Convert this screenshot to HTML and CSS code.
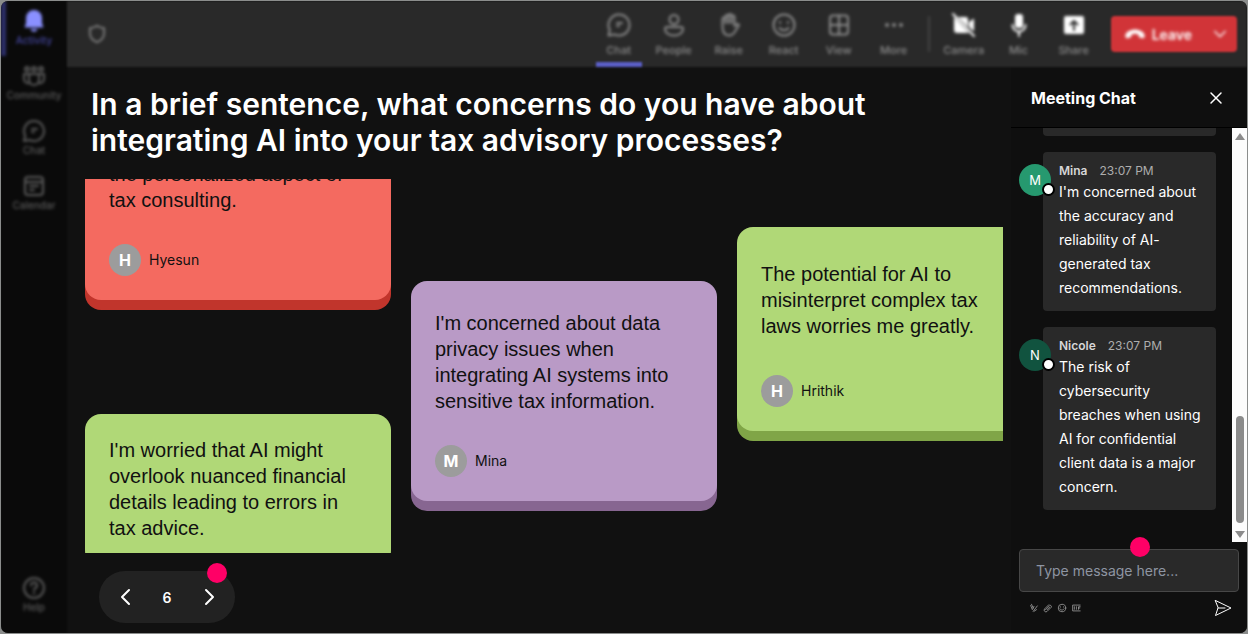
FILE: index.html
```html
<!DOCTYPE html>
<html lang="en">

<head>
    <meta charset="UTF-8">
    <meta name="viewport" content="width=device-width, initial-scale=1.0">
    <title>Meeting</title>
    <link rel="stylesheet" href="styles.css">
</head>

<body>
    <div class="app">
        <!-- Sidebar -->
        <nav class="sidebar">
            <a href="#" class="side-item active">
                <svg class="icon" viewBox="0 0 24 24"><path class="fill" d="M12 1a8 8 0 0 0-8 8v5l-1.500 4.500h19L20 14V9a8 8 0 0 0-8-8zM8.500 20a3.600 3.600 0 0 0 7 0z"/></svg>
                <span>Activity</span>
            </a>
            <a href="#" class="side-item">
                <svg class="icon" viewBox="0 0 24 24"><circle cx="5" cy="5" r="2"/><circle cx="12" cy="5" r="2"/><circle cx="19" cy="5" r="2"/><path d="M7 10h10v6a5 5 0 0 1-10 0zM7 10H2v5a4 4 0 0 0 5 4M17 10h5v5a4 4 0 0 1-5 4"/></svg>
                <span>Community</span>
            </a>
            <a href="#" class="side-item">
                <svg class="icon" viewBox="0 0 24 24"><path d="M12 2a10 10 0 1 1-4.500 18.900L2 22l1.200-5.300A10 10 0 0 1 12 2zM10 10h5M10 13h2"/></svg>
                <span>Chat</span>
            </a>
            <a href="#" class="side-item">
                <svg class="icon" viewBox="0 0 24 24"><rect x="3" y="3" width="18" height="18" rx="3"/><path d="M3 8h18M8 12h8M8 16h4"/></svg>
                <span>Calendar</span>
            </a>
            <a href="#" class="side-item help">
                <svg class="icon" viewBox="0 0 24 24"><circle cx="12" cy="12" r="10"/><path d="M9 9.500a3 3 0 1 1 4 2.800c-.8.400-1 .8-1 1.700M12 16.500v1"/></svg>
                <span>Help</span>
            </a>
        </nav>

        <div class="main">
            <!-- Meeting controls -->
            <header class="topbar">
                <svg class="icon shield" viewBox="0 0 24 24"><path d="M12 2c2.500 2 5.500 3 8.500 3v6c0 5-3 8.500-8.500 11-5.500-2.500-8.500-6-8.500-11V5c3 0 6-1 8.500-3z"/></svg>
                <div class="tools">
                    <button class="tool active">
                        <svg class="icon" viewBox="0 0 24 24"><path d="M12 1.500a10.500 10.500 0 1 1-4.700 19.900L1.500 22.500l1.300-5.400A10.500 10.500 0 0 1 12 1.500zM10 10h5M10 13h2"/></svg>
                        <span>Chat</span>
                    </button>
                    <button class="tool">
                        <svg class="icon" viewBox="0 0 24 24"><circle cx="12" cy="6.500" r="4.500"/><path d="M5 14h14a2 2 0 0 1 2 2c0 4-4 6.500-9 6.500S3 20 3 16a2 2 0 0 1 2-2z"/></svg>
                        <span>People</span>
                    </button>
                    <button class="tool">
                        <svg class="icon" viewBox="0 0 24 24"><path d="M5.500 13V6a1.500 1.500 0 0 1 3 0V3.500a1.500 1.500 0 0 1 3 0V2.500a1.500 1.500 0 0 1 3 0V4a1.500 1.500 0 0 1 3 0v9l2-1.500c1.500-1 3 0 2 1.500l-4.500 7c-1.500 2-3 2.500-5 2.500-4 0-6.500-3-6.500-9.500zM8.500 4v6M11.500 3v7M14.500 3v7"/></svg>
                        <span>Raise</span>
                    </button>
                    <button class="tool">
                        <svg class="icon" viewBox="0 0 24 24"><circle cx="12" cy="12" r="10.500"/><path d="M8 9v1M16 9v1M7.500 15c2.500 3 6.500 3 9 0"/></svg>
                        <span>React</span>
                    </button>
                    <button class="tool">
                        <svg class="icon" viewBox="0 0 24 24"><rect x="3" y="2.500" width="18" height="19" rx="3"/><path d="M12 2.500v19M3 12h18"/></svg>
                        <span>View</span>
                    </button>
                    <button class="tool">
                        <svg class="icon" viewBox="0 0 24 24"><circle class="fill" cx="5" cy="12" r="2"/><circle class="fill" cx="12" cy="12" r="2"/><circle class="fill" cx="19" cy="12" r="2"/></svg>
                        <span>More</span>
                    </button>
                    <span class="divider"></span>
                    <button class="tool bright">
                        <svg class="icon" viewBox="0 0 24 24"><path class="fill" d="M2 4l15 16H5a3 3 0 0 1-3-3zM6 4h8a2 2 0 0 1 2 2v8zM17 9l5-3.500v13L17 14z"/><path d="M1 1l21 22"/></svg>
                        <span>Camera</span>
                    </button>
                    <button class="tool bright">
                        <svg class="icon" viewBox="0 0 24 24"><rect class="fill" x="8" y="1" width="8" height="14" rx="3"/><path d="M5.500 12a6.500 6.500 0 0 0 13 0M12 18.500V23"/></svg>
                        <span>Mic</span>
                    </button>
                    <button class="tool bright">
                        <svg class="icon" viewBox="0 0 24 24"><rect class="fill" x="2" y="3" width="20" height="18" rx="2"/><path class="arrow" d="M12 17V8M8.500 11.500L12 8l3.500 3.500"/></svg>
                        <span>Share</span>
                    </button>
                </div>
                <button class="leave">
                    <svg class="icon" viewBox="0 0 24 24"><path class="fill" d="M12 7c5 0 9.500 2.500 10.500 6 .4 2-.5 4-2 3.700l-3-.7c-1.500-.4-1.500-3-2-3.500-2-.9-5-.9-7 0-.5.500-.5 3.100-2 3.500l-3 .7c-1.500.3-2.400-1.700-2-3.700C2.500 9.500 7 7 12 7z"/></svg>
                    <span>Leave</span>
                    <svg class="icon chevron" viewBox="0 0 24 24"><path d="M4 8l8 8 8-8"/></svg>
                </button>
            </header>

            <div class="content">
                <!-- Answers -->
                <section class="board">
                    <h1>In a brief sentence, what concerns do you have about integrating AI into your tax advisory processes?</h1>
                    <div class="wall">
                        <div class="column first">
                            <article class="card red">
                                <p>the personalized aspect of tax consulting.</p>
                                <div class="author"><span class="initial">H</span>Hyesun</div>
                            </article>
                            <article class="card green">
                                <p>I'm worried that AI might overlook nuanced financial details leading to errors in tax advice.</p>
                            </article>
                        </div>
                        <div class="column second">
                            <article class="card purple">
                                <p>I'm concerned about data privacy issues when integrating AI systems into sensitive tax information.</p>
                                <div class="author"><span class="initial">M</span>Mina</div>
                            </article>
                        </div>
                        <div class="column third">
                            <article class="card green">
                                <p>The potential for AI to misinterpret complex tax laws worries me greatly.</p>
                                <div class="author"><span class="initial">H</span>Hrithik</div>
                            </article>
                        </div>
                    </div>
                    <div class="pager">
                        <button aria-label="Previous"><svg class="icon" viewBox="0 0 16 20"><path d="M12 3l-7 7 7 7"/></svg></button>
                        <span>6</span>
                        <button aria-label="Next"><svg class="icon" viewBox="0 0 16 20"><path d="M5 3l7 7-7 7"/></svg></button>
                        <i class="dot"></i>
                    </div>
                </section>

                <!-- Chat -->
                <aside class="chat">
                    <div class="chat-header">
                        <h2>Meeting Chat</h2>
                        <button aria-label="Close"><svg class="icon" viewBox="0 0 14 14"><path d="M2 2l10 10M12 2L2 12"/></svg></button>
                    </div>
                    <div class="chat-body">
                        <div class="messages">
                            <div class="message previous"></div>
                            <div class="message">
                                <span class="avatar mina">M</span>
                                <div class="meta"><strong>Mina</strong><time>23:07 PM</time></div>
                                <p>I'm concerned about the accuracy and reliability of AI-generated tax recommendations.</p>
                            </div>
                            <div class="message">
                                <span class="avatar nicole">N</span>
                                <div class="meta"><strong>Nicole</strong><time>23:07 PM</time></div>
                                <p>The risk of cybersecurity breaches when using AI for confidential client data is a major concern.</p>
                            </div>
                        </div>
                        <div class="scrollbar">
                            <i class="up"></i>
                            <i class="thumb"></i>
                            <i class="down"></i>
                        </div>
                    </div>
                    <div class="compose">
                        <i class="dot"></i>
                        <input type="text" placeholder="Type message here..." aria-label="Message" autocomplete="off">
                        <div class="compose-tools">
                            <button aria-label="Format"><svg class="icon" viewBox="0 0 12 12"><path d="M2 3l2 5 2-4M3 1.500L5 6M5 10l5-6.500M6 10l3-2"/></svg></button>
                            <button aria-label="Attach"><svg class="icon" viewBox="0 0 12 12"><path d="M3 8l5-5a1.500 1.500 0 0 1 2 2l-5 5a2 2 0 0 1-3-3l5-5M5 8l3-3"/></svg></button>
                            <button aria-label="Emoji"><svg class="icon" viewBox="0 0 12 12"><circle cx="6" cy="6" r="4.500"/><path d="M4 4.500v.5M8 4.500v.5M3.500 7c1 2 4 2 5 0"/></svg></button>
                            <button aria-label="GIF"><svg class="icon" viewBox="0 0 12 12"><path d="M11 2.500H2v7h9M4 4.500v3M6.500 4.500v3M9 7.500v-3h2M9 6h1.500"/></svg></button>
                            <button class="send" aria-label="Send"><svg class="icon" viewBox="0 0 18 18"><path d="M1.500 1.500L17 9 1.500 16.500 4 9zM4 9h7"/></svg></button>
                        </div>
                    </div>
                </aside>
            </div>
        </div>
    </div>
</body>

</html>
```
FILE: styles.css
```css
* {
    box-sizing: border-box;
}

body {
    margin: 0;
    padding: 1px;
    background: #8b8d8c;
    font-family: Inter, "Liberation Sans", sans-serif;
    color: #fff;
}

h1,
h2,
p {
    margin: 0;
}

button {
    padding: 0;
    border: none;
    background: none;
    color: inherit;
    font: inherit;
    cursor: pointer;
}

.icon {
    display: block;
    width: 24px;
    height: 24px;
    fill: none;
    stroke: currentColor;
    stroke-width: 2;
    stroke-linecap: round;
    stroke-linejoin: round;
}

.icon .fill {
    fill: currentColor;
    stroke: none;
}

.app {
    display: flex;
    min-height: calc(100vh - 2px);
    border-radius: 7px;
    background: #111;
    overflow: hidden;
}

/* Sidebar */
.sidebar {
    display: flex;
    flex-direction: column;
    width: 66px;
    background: #0a0a0a;
    padding-bottom: 10px;
    filter: blur(1px);
}

.side-item {
    display: flex;
    flex-direction: column;
    align-items: center;
    gap: 1px;
    height: 55px;
    padding-top: 8px;
    color: #5c5c5c;
    font-size: 10px;
    font-weight: 500;
    line-height: 12px;
    text-decoration: none;
    filter: blur(1px);
}

.side-item.active {
    border-left: 5px solid #2d2f6b;
    padding-right: 5px;
    color: #4547a0;
}

.side-item.active .icon {
    color: #8a90ff;
}

.side-item.help {
    margin-top: auto;
}

.main {
    display: flex;
    flex-direction: column;
    flex: 1;
    min-width: 0;
}

/* Top bar */
.topbar {
    display: flex;
    align-items: center;
    height: 66px;
    padding: 0 10px 0 20px;
    background: #292929;
    color: #8c8c8c;
    filter: blur(1px);
}

.topbar .icon,
.topbar span {
    filter: blur(1px);
}

.shield {
    width: 20px;
    height: 20px;
}

.tools {
    display: flex;
    align-items: center;
    gap: 9px;
    margin-left: auto;
    margin-right: 14px;
}

.tool {
    display: flex;
    flex-direction: column;
    align-items: center;
    gap: 4px;
    width: 46px;
    height: 66px;
    padding-top: 12px;
    font-size: 11px;
    font-weight: 500;
    line-height: 18px;
}

.tool.active {
    border-bottom: 5px solid #5b5fc7;
}

.tool.bright .icon {
    color: #fff;
}

.tool .arrow {
    stroke: #292929;
}

.divider {
    width: 2px;
    height: 36px;
    margin: 0 2px;
    background: #444;
}

.leave {
    display: flex;
    align-items: center;
    gap: 6px;
    height: 36px;
    padding: 0 9px 0 13px;
    border-radius: 4px;
    background: #d13438;
    color: #fff;
    font-size: 14px;
    font-weight: 600;
}

.leave .icon {
    width: 22px;
    height: 22px;
}

.leave .chevron {
    width: 16px;
    height: 16px;
    margin-left: 14px;
}

.content {
    display: flex;
    flex: 1;
    min-height: 0;
}

/* Board */
.board {
    display: flex;
    flex-direction: column;
    flex: 1;
    min-width: 0;
    padding: 19px 8px 10px 18px;
}

.board h1 {
    max-width: 800px;
    margin: 0 6px 21px;
    font-size: 30px;
    font-weight: 600;
    line-height: 36px;
}

.wall {
    display: flex;
    flex: 1 0 374px;
    height: 374px;
    gap: 20px;
    overflow: hidden;
}

.column {
    flex: 0 0 306px;
}

.column.first {
    margin-top: -42px;
}

.column.second {
    padding-top: 102px;
}

.column.third {
    padding-top: 48px;
}

.card {
    padding: 24px;
    border-radius: 16px;
    color: #111;
    font-family: "Liberation Sans", sans-serif;
    font-size: 20px;
    line-height: 26px;
}

.card.red {
    margin-bottom: 114px;
    background: #f46a60;
    box-shadow: 0 10px #c1352c;
}

.card.purple {
    padding-top: 29px;
    background: #b99ac6;
    box-shadow: 0 10px #876691;
}

.card.green {
    padding-top: 23px;
    background: #b0d877;
    box-shadow: 0 10px #80a547;
}

.third .card.green {
    padding-top: 34px;
}

.author {
    display: flex;
    align-items: center;
    gap: 8px;
    margin-top: 31px;
    font-family: Inter, sans-serif;
    font-size: 14px;
    line-height: 20px;
}

.third .author {
    margin-top: 36px;
}

.initial {
    width: 32px;
    border-radius: 50%;
    background: #9c9c9c;
    color: #fff;
    font-size: 16px;
    font-weight: 700;
    line-height: 32px;
    text-align: center;
}

.pager {
    position: relative;
    display: flex;
    align-items: center;
    justify-content: space-between;
    width: 136px;
    height: 52px;
    margin: 18px 14px 0;
    padding: 0 18px;
    border-radius: 26px;
    background: #222;
    font-size: 14px;
    font-weight: 600;
}

.pager .icon {
    width: 16px;
    height: 20px;
}

.dot {
    position: absolute;
    width: 20px;
    height: 20px;
    border-radius: 50%;
    background: #ff0066;
}

.pager .dot {
    top: -8px;
    right: 8px;
}

/* Chat */
.chat {
    display: flex;
    flex-direction: column;
    width: 236px;
    background: #0f0f0f;
}

.chat-header {
    display: flex;
    align-items: center;
    justify-content: space-between;
    height: 61px;
    padding: 2px 24px 0 20px;
    border-bottom: 1px solid #000;
}

.chat-header h2 {
    font-size: 16px;
    font-weight: 700;
    line-height: 24px;
}

.chat-header .icon {
    width: 14px;
    height: 14px;
    stroke-width: 1.5;
}

.chat-body {
    display: flex;
    flex: 1 0 414px;
    height: 414px;
}

.messages {
    flex: 1;
    padding: 0 16px 0 32px;
    overflow: hidden;
}

.message {
    position: relative;
    margin-bottom: 16px;
    padding: 10px 12px 11px 16px;
    border-radius: 4px;
    background: #292929;
}

.message.previous {
    height: 8px;
    padding: 0;
    border-radius: 0 0 4px 4px;
}

.message p {
    font-size: 14px;
    line-height: 24px;
}

.meta {
    display: flex;
    gap: 12px;
    font-size: 12px;
    line-height: 18px;
    color: #adadad;
}

.meta strong {
    font-weight: 600;
    color: #d6d6d6;
}

.avatar {
    position: absolute;
    top: 12px;
    left: -24px;
    width: 32px;
    height: 32px;
    border-radius: 50%;
    font-size: 13px;
    line-height: 32px;
    text-align: center;
}

/* Presence marker */
.avatar::after {
    content: "";
    position: absolute;
    right: -4px;
    bottom: 0;
    box-sizing: border-box;
    width: 13px;
    height: 13px;
    border: 2px solid #000;
    border-radius: 50%;
    background: #fff;
}

.avatar.mina {
    background: #26996f;
}

.avatar.nicole {
    background: #11533f;
}

.scrollbar {
    display: flex;
    flex-direction: column;
    align-items: center;
    width: 15px;
    padding: 5px 0 4px;
    background: #fcfcfc;
}

.scrollbar .up,
.scrollbar .down {
    border: 5px solid transparent;
}

.scrollbar .up {
    border-top-width: 0;
    border-bottom: 7px solid #8b8b8b;
    margin-bottom: auto;
}

.scrollbar .thumb {
    width: 8px;
    height: 107px;
    border-radius: 4px;
    background: #8b8b8b;
}

.scrollbar .down {
    border-bottom-width: 0;
    border-top: 7px solid #8b8b8b;
    margin-top: 8px;
}

.compose {
    position: relative;
    padding: 7px 8px 16px;
}

.compose .dot {
    top: -5px;
    left: 50%;
    margin-left: 1px;
}

.compose input {
    display: block;
    width: 100%;
    height: 43px;
    padding: 0 16px;
    border: 1px solid #474747;
    border-radius: 4px;
    background: #292929;
    color: #fff;
    font: 14px Inter, sans-serif;
}

.compose input::placeholder {
    color: #8e95a2;
}

.compose-tools {
    display: flex;
    align-items: center;
    gap: 4px;
    padding: 7px 7px 0 10px;
    color: #9a9a9a;
}

.compose-tools .icon {
    width: 10px;
    height: 10px;
    stroke-width: 1;
}

.compose-tools .send {
    margin-left: auto;
    color: #fff;
}

.compose-tools .send .icon {
    width: 18px;
    height: 18px;
}
```
